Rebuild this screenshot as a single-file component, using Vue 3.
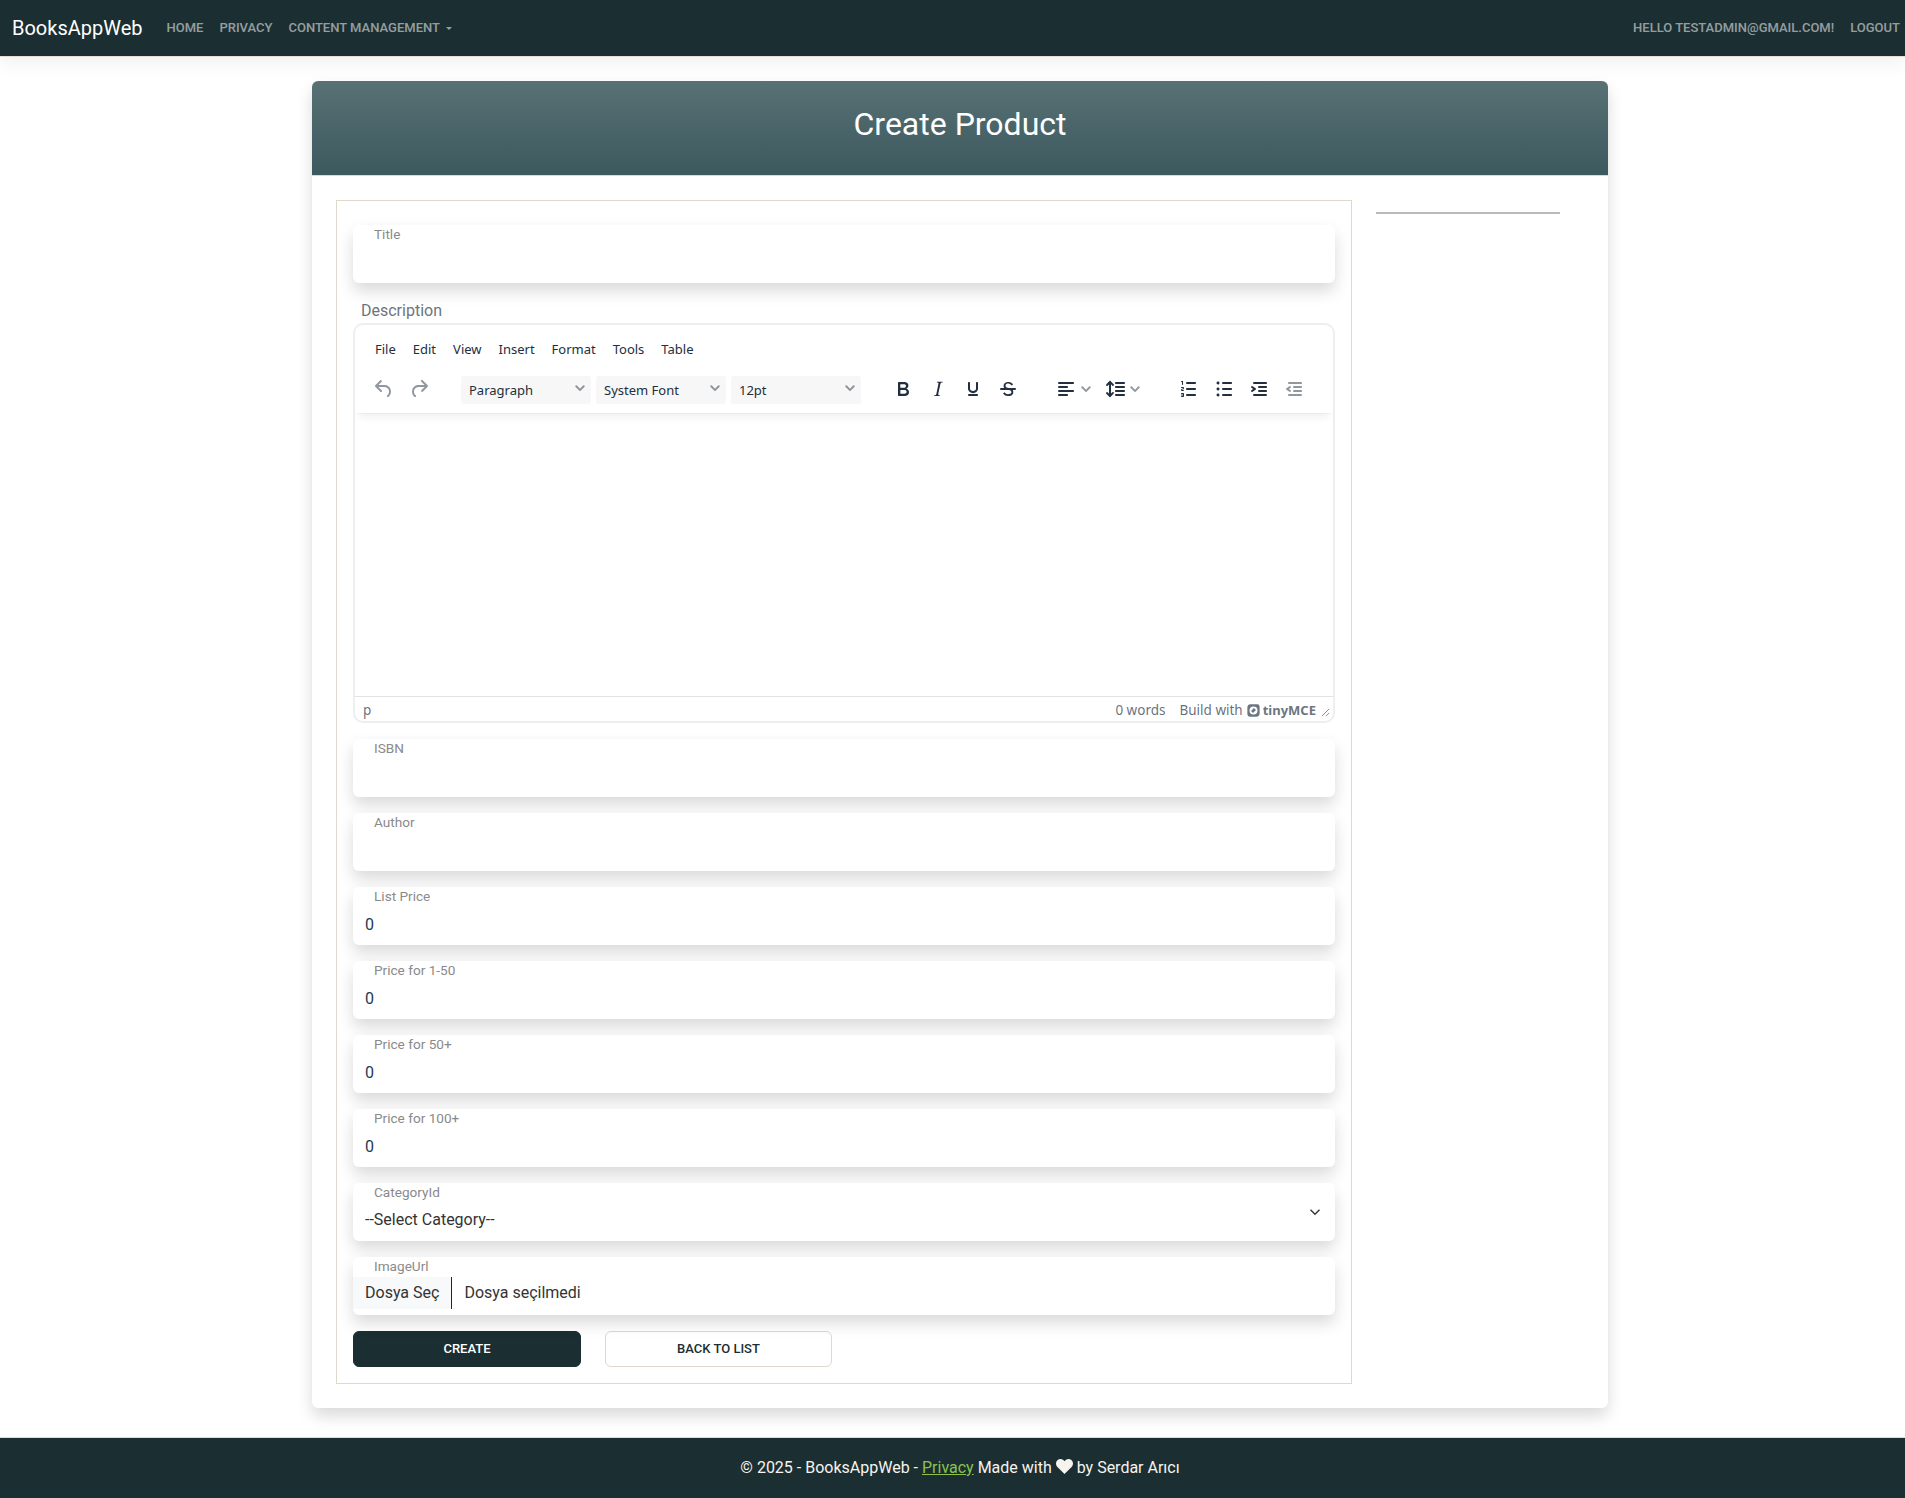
<script setup>
const topFields = [{ label: 'Title', value: '' }]
const fields = [
  { label: 'ISBN', value: '' },
  { label: 'Author', value: '' },
  { label: 'List Price', value: '0' },
  { label: 'Price for 1-50', value: '0' },
  { label: 'Price for 50+', value: '0' },
  { label: 'Price for 100+', value: '0' },
]
const menus = ['File', 'Edit', 'View', 'Insert', 'Format', 'Tools', 'Table']
const selects = ['Paragraph', 'System Font', '12pt']
const chevron = 'M.6.6a.9.9 0 0 1 1.3 0L5 3.7 8.1.6a.9.9 0 0 1 1.3 1.3L5 6.3.6 1.9a.9.9 0 0 1 0-1.3Z'
const icons = {
  undo: 'M6.4 8H12c3.7 0 6.2 2 6.8 5.1.6 2.7-.4 5.6-2.3 6.8a1 1 0 0 1-1-1.8c1.1-.6 1.8-2.7 1.4-4.6-.5-2.1-2.1-3.5-4.9-3.5H6.4l3.3 3.3a1 1 0 1 1-1.4 1.4l-5-5a1 1 0 0 1 0-1.4l5-5a1 1 0 0 1 1.4 1.4L6.4 8Z',
  redo: 'M17.6 10H12c-2.8 0-4.4 1.4-4.9 3.5-.4 2 .3 4 1.4 4.6a1 1 0 1 1-1 1.8c-2-1.2-2.9-4.1-2.3-6.8.6-3 3-5.1 6.8-5.1h5.6l-3.3-3.3a1 1 0 1 1 1.4-1.4l5 5a1 1 0 0 1 0 1.4l-5 5a1 1 0 0 1-1.4-1.4l3.3-3.3Z',
  bold: 'M7.8 19c-.3 0-.5 0-.6-.2l-.2-.5V5.7c0-.2 0-.4.2-.5l.6-.2h5c1.5 0 2.7.3 3.5 1 .7.6 1.1 1.4 1.1 2.5a3 3 0 0 1-.6 1.9c-.4.6-1 1-1.6 1.2.4.1.9.3 1.3.6s.8.7 1 1.2c.4.4.5 1 .5 1.6 0 1.3-.4 2.3-1.3 3-.8.7-2.1 1-3.8 1H7.8Zm5-8.3c.6 0 1.2-.1 1.6-.5.4-.3.6-.7.6-1.3 0-1.1-.8-1.7-2.3-1.7H9.3v3.5h3.4Zm.5 6c.7 0 1.3-.1 1.7-.4.4-.4.6-.9.6-1.5s-.2-1-.7-1.4c-.4-.3-1-.4-2-.4H9.4v3.8h4Z',
  italic: 'M16.7 4.7l-.1.9h-.3c-.6 0-1 0-1.4.3-.3.3-.4.6-.5 1.1l-2.1 9.8v.6c0 .5.4.8 1.4.8h.2l-.2.8H8l.2-.8h.2c1.1 0 1.8-.5 2-1.5l2-9.8.1-.5c0-.6-.4-.8-1.4-.8h-.3l.2-.9h5.8Z',
  underline: 'M16 5c.6 0 1 .4 1 1v5.5a4 4 0 0 1-.4 1.8l-1 1.4a5.3 5.3 0 0 1-5.5 1 5 5 0 0 1-1.6-1c-.5-.4-.8-.9-1.1-1.4a4 4 0 0 1-.4-1.8V6c0-.6.4-1 1-1s1 .4 1 1v5.5c0 .3 0 .6.2 1l.6.7a3.3 3.3 0 0 0 2.2.8 3.4 3.4 0 0 0 2.2-.8c.3-.2.4-.5.6-.8l.2-.9V6c0-.6.4-1 1-1ZM8 17h8c.6 0 1 .4 1 1s-.4 1-1 1H8a1 1 0 0 1 0-2Z',
  strike: 'M15.6 8.5c-.5-.7-1-1.1-1.3-1.3-.6-.4-1.3-.6-2-.6-2.7 0-2.8 1.7-2.8 2.1 0 1.6 1.8 2 3.2 2.3 4.4.9 4.6 2.8 4.6 3.9 0 1.4-.7 4.1-5 4.1A6.2 6.2 0 0 1 7 16.4l1.5-1.1c.4.6 1.6 2 3.7 2 1.6 0 2.5-.4 3-1.2.4-.8.3-2-.8-2.6-.7-.4-1.6-.7-2.9-1-1-.2-3.9-.8-3.9-3.6C7.6 6 10.3 5 12.4 5c2.9 0 4.2 1.6 4.7 2.4l-1.5 1.1ZM5 11h14a1 1 0 0 1 0 2H5a1 1 0 0 1 0-2Z',
  align: 'M5 5h14c.6 0 1 .4 1 1s-.4 1-1 1H5a1 1 0 1 1 0-2Zm0 4h8c.6 0 1 .4 1 1s-.4 1-1 1H5a1 1 0 1 1 0-2Zm0 8h8c.6 0 1 .4 1 1s-.4 1-1 1H5a1 1 0 0 1 0-2Zm0-4h14c.6 0 1 .4 1 1s-.4 1-1 1H5a1 1 0 0 1 0-2Z',
  lineHeight: 'M21 5a1 1 0 0 1 .1 2H13a1 1 0 0 1-.1-2H21zm0 4a1 1 0 0 1 .1 2H13a1 1 0 0 1-.1-2H21zm0 4a1 1 0 0 1 .1 2H13a1 1 0 0 1-.1-2H21zm0 4a1 1 0 0 1 .1 2H13a1 1 0 0 1-.1-2H21zM7 3.6l3.7 3.7a1 1 0 0 1-1.3 1.5h-.1L8 7.3v9.2l1.3-1.3a1 1 0 0 1 1.3 0h.1c.4.4.4 1 0 1.3v.1L7 20.4l-3.7-3.7a1 1 0 0 1 1.3-1.5h.1L6 16.7V7.4L4.7 8.7a1 1 0 0 1-1.3 0h-.1a1 1 0 0 1 0-1.3v-.1L7 3.6z',
  ol: 'M10 17h8c.6 0 1 .4 1 1s-.4 1-1 1h-8a1 1 0 0 1 0-2Zm0-6h8c.6 0 1 .4 1 1s-.4 1-1 1h-8a1 1 0 0 1 0-2Zm0-6h8c.6 0 1 .4 1 1s-.4 1-1 1h-8a1 1 0 1 1 0-2ZM6 4v3.5c0 .3-.2.5-.5.5a.5.5 0 0 1-.5-.5V5h-.5a.5.5 0 0 1 0-1H6Zm-1 8.8l.2.2h1.3c.3 0 .5.2.5.5s-.2.5-.5.5H4.9a1 1 0 0 1-.9-1V13c0-.4.3-.8.6-1l1.2-.4.2-.3a.2.2 0 0 0-.2-.2H4.5a.5.5 0 0 1-.5-.5c0-.3.2-.5.5-.5h1.6c.5 0 .9.4.9 1v.1c0 .4-.3.8-.6 1l-1.2.4-.2.3ZM7 17v2c0 .6-.4 1-1 1H4.5a.5.5 0 0 1 0-1h1.2c.2 0 .3-.1.3-.3 0-.2-.1-.3-.3-.3H4.4a.4.4 0 1 1 0-.8h1.3c.2 0 .3-.1.3-.3 0-.2-.1-.3-.3-.3H4.5a.5.5 0 1 1 0-1H6c.6 0 1 .4 1 1Z',
  ul: 'M11 5h8c.6 0 1 .4 1 1s-.4 1-1 1h-8a1 1 0 0 1 0-2Zm0 6h8c.6 0 1 .4 1 1s-.4 1-1 1h-8a1 1 0 0 1 0-2Zm0 6h8c.6 0 1 .4 1 1s-.4 1-1 1h-8a1 1 0 0 1 0-2ZM4.5 6c0-.4.1-.8.4-1 .3-.4.7-.5 1.1-.5.4 0 .8.1 1 .4.4.3.5.7.5 1.1 0 .4-.1.8-.4 1-.3.4-.7.5-1.1.5-.4 0-.8-.1-1-.4-.4-.3-.5-.7-.5-1.1Zm0 6c0-.4.1-.8.4-1 .3-.4.7-.5 1.1-.5.4 0 .8.1 1 .4.4.3.5.7.5 1.1 0 .4-.1.8-.4 1-.3.4-.7.5-1.1.5-.4 0-.8-.1-1-.4-.4-.3-.5-.7-.5-1.1Zm0 6c0-.4.1-.8.4-1 .3-.4.7-.5 1.1-.5.4 0 .8.1 1 .4.4.3.5.7.5 1.1 0 .4-.1.8-.4 1-.3.4-.7.5-1.1.5-.4 0-.8-.1-1-.4-.4-.3-.5-.7-.5-1.1Z',
  indent: 'M7 5h12c.6 0 1 .4 1 1s-.4 1-1 1H7a1 1 0 1 1 0-2Zm5 4h7c.6 0 1 .4 1 1s-.4 1-1 1h-7a1 1 0 0 1 0-2Zm0 4h7c.6 0 1 .4 1 1s-.4 1-1 1h-7a1 1 0 0 1 0-2Zm-5 4h12a1 1 0 0 1 0 2H7a1 1 0 0 1 0-2Zm-2.6-3.8L6.2 12l-1.8-1.2a1 1 0 0 1 1.2-1.6l3 2a1 1 0 0 1 0 1.6l-3 2a1 1 0 1 1-1.2-1.6Z',
  outdent: 'M7 5h12c.6 0 1 .4 1 1s-.4 1-1 1H7a1 1 0 1 1 0-2Zm5 4h7c.6 0 1 .4 1 1s-.4 1-1 1h-7a1 1 0 0 1 0-2Zm0 4h7c.6 0 1 .4 1 1s-.4 1-1 1h-7a1 1 0 0 1 0-2Zm-5 4h12a1 1 0 0 1 0 2H7a1 1 0 0 1 0-2Zm1.6-3.8a1 1 0 0 1-1.2 1.6l-3-2a1 1 0 0 1 0-1.6l3-2a1 1 0 0 1 1.2 1.6L6.8 12l1.8 1.2Z',
}
</script>

<template>
  <nav class="navbar">
    <a class="brand" href="#">BooksAppWeb</a>
    <ul class="nav-list">
      <li><a href="#">Home</a></li>
      <li><a href="#">Privacy</a></li>
      <li><a href="#" class="dropdown">Content Management</a></li>
    </ul>
    <ul class="nav-list nav-right">
      <li><a href="#">Hello testadmin@gmail.com!</a></li>
      <li><a href="#">Logout</a></li>
    </ul>
  </nav>

  <main class="page">
    <section class="card">
      <div class="card-header">
        <h2>Create Product</h2>
      </div>
      <div class="card-body">
        <form class="form-box" @submit.prevent>
          <div v-for="f in topFields" :key="f.label" class="field">
            <label>{{ f.label }}</label>
            <input type="text" :value="f.value" />
          </div>

          <div class="desc-label">Description</div>
          <div class="editor">
            <div class="editor-header">
              <div class="menubar">
                <span v-for="m in menus" :key="m">{{ m }}</span>
              </div>
              <div class="toolbar">
                <svg class="icon off" viewBox="0 0 24 24"><path :d="icons.undo" /></svg>
                <svg class="icon off gap-icon" viewBox="0 0 24 24"><path :d="icons.redo" /></svg>
                <div class="select-group">
                  <div v-for="s in selects" :key="s" class="tb-select">
                    <span>{{ s }}</span>
                    <svg class="chev" viewBox="0 0 10 10"><path :d="chevron" /></svg>
                  </div>
                </div>
                <div class="icon-group format-group">
                  <svg class="icon" viewBox="0 0 24 24"><path :d="icons.bold" /></svg>
                  <svg class="icon" viewBox="0 0 24 24"><path :d="icons.italic" /></svg>
                  <svg class="icon" viewBox="0 0 24 24"><path :d="icons.underline" /></svg>
                  <svg class="icon" viewBox="0 0 24 24"><path :d="icons.strike" /></svg>
                </div>
                <div class="split-group">
                  <div class="split">
                    <svg class="icon" viewBox="0 0 24 24"><path :d="icons.align" /></svg>
                    <svg class="chev" viewBox="0 0 10 10"><path :d="chevron" /></svg>
                  </div>
                  <div class="split">
                    <svg class="icon" viewBox="0 0 24 24"><path :d="icons.lineHeight" /></svg>
                    <svg class="chev" viewBox="0 0 10 10"><path :d="chevron" /></svg>
                  </div>
                </div>
                <div class="icon-group list-group">
                  <svg class="icon" viewBox="0 0 24 24"><path :d="icons.ol" /></svg>
                  <svg class="icon" viewBox="0 0 24 24"><path :d="icons.ul" /></svg>
                  <svg class="icon" viewBox="0 0 24 24"><path :d="icons.indent" /></svg>
                  <svg class="icon off" viewBox="0 0 24 24"><path :d="icons.outdent" /></svg>
                </div>
              </div>
            </div>
            <div class="editor-content"></div>
            <div class="statusbar">
              <span class="path">p</span>
              <span class="words">0 words</span>
              <span class="build">Build with</span>
              <svg class="tiny-logo" viewBox="0 0 14 14">
                <path d="M4 .4h7a2.600 2.600 0 0 1 2.600 2.600v7a3.600 3.600 0 0 1-3.600 3.600H3A2.600 2.600 0 0 1 .4 11V4A3.600 3.600 0 0 1 4 .4Z" />
                <circle class="cut" cx="7" cy="7" r="4.300" />
                <path d="M7.500 4.400 9.600 6.500 6.500 9.600 4.400 7.500Z" />
              </svg>
              <span class="tiny-name">tinyMCE</span>
              <svg class="resize" viewBox="0 0 10 10">
                <path d="M9 1 1 9M9 5.500 5.500 9" />
              </svg>
            </div>
          </div>

          <div v-for="f in fields" :key="f.label" class="field">
            <label>{{ f.label }}</label>
            <input type="text" :value="f.value" />
          </div>

          <div class="field">
            <label>CategoryId</label>
            <select class="cat-select">
              <option>--Select Category--</option>
            </select>
            <svg class="select-arrow" viewBox="0 0 16 16">
              <path d="m2 5 6 6 6-6" />
            </svg>
          </div>

          <div class="field">
            <label>ImageUrl</label>
            <div class="file-row">
              <span class="file-btn">Dosya Seç</span>
              <span class="file-name">Dosya seçilmedi</span>
            </div>
          </div>

          <div class="actions">
            <button type="submit" class="btn btn-create">Create</button>
            <a href="#" class="btn btn-back">Back to List</a>
          </div>
        </form>
        <aside class="side">
          <hr />
        </aside>
      </div>
    </section>
  </main>

  <footer class="footer">
    © 2025 - BooksAppWeb - <a href="#">Privacy</a> Made with
    <svg class="heart" viewBox="0 0 17 15">
      <path d="M8.500 15 1.400 8C-.5 6-.4 3 1.400 1.300 3.400-.5 6.500-.3 8.500 2.200c2-2.500 5.100-2.700 7.100-.9C17.400 3 17.500 6 15.600 8Z" />
    </svg>
    by Serdar Arıcı
  </footer>
</template>

<style>
html, body {
  margin: 0;
  background: #fff;
}
</style>

<style scoped>
* {
  box-sizing: border-box;
}

.navbar {
  height: 57px;
  display: flex;
  align-items: center;
  padding: 0 5px 0 12px;
  background: #1b2e32;
  border-bottom: 1px solid #e6dfd0;
  box-shadow: 0 8px 16px rgba(0, 0, 0, 0.05);
  font-family: Roboto, sans-serif;
}

.brand {
  color: #fff;
  font-size: 20px;
  text-decoration: none;
  margin-right: 24px;
}

.nav-list {
  display: flex;
  gap: 16px;
  list-style: none;
  margin: 0 0 4px;
  padding: 0;
}

.nav-right {
  margin-left: auto;
}

.nav-list a {
  color: rgba(255, 255, 255, 0.55);
  font-size: 13px;
  font-weight: 500;
  text-transform: uppercase;
  text-decoration: none;
}

.dropdown::after {
  content: "";
  display: inline-block;
  margin-left: 6px;
  vertical-align: 2px;
  border-top: 3px solid;
  border-left: 3px solid transparent;
  border-right: 3px solid transparent;
}

.page {
  width: 1296px;
  margin-left: 312px;
  padding: 24px 0 29px;
  font-family: Roboto, sans-serif;
}

.card {
  background: #fff;
  border-radius: 6px;
  box-shadow: 0 8px 16px rgba(0, 0, 0, 0.15);
}

.card-header {
  height: 95px;
  padding-bottom: 8px;
  display: flex;
  align-items: center;
  justify-content: center;
  background: linear-gradient(180deg, #587175, #3c595d);
  border-bottom: 1px solid #d9d9d9;
  border-radius: 6px 6px 0 0;
}

.card-header h2 {
  margin: 0;
  color: #fff;
  font-size: 32px;
  font-weight: 400;
}

.card-body {
  display: flex;
  gap: 24px;
  padding: 24px;
}

.form-box {
  width: 1016px;
  padding: 24px 16px 16px;
  border: 1px solid #dfd8cc;
}

.side {
  width: 184px;
}

.side hr {
  margin: 12px 0 0;
  border: 0;
  border-top: 2px solid #b9b9b9;
}

.field {
  position: relative;
  height: 58px;
  margin-bottom: 16px;
  background: #fff;
  border-radius: 6px;
  box-shadow: 0 8px 16px rgba(0, 0, 0, 0.15);
}

.field label {
  display: block;
  height: 18px;
  padding-left: 21px;
  color: #8a8a8a;
  font-size: 13.6px;
  line-height: 18px;
}

.field input,
.cat-select {
  display: block;
  width: 100%;
  height: 38px;
  padding: 0 12px;
  border: 0;
  outline: 0;
  background: transparent;
  color: #1f3a52;
  font-family: Roboto, sans-serif;
  font-size: 16px;
}

.cat-select {
  appearance: none;
  height: 37px;
  color: #333;
}

.select-arrow {
  position: absolute;
  right: 14px;
  top: 23px;
  width: 12px;
  height: 12px;
  fill: none;
  stroke: #343a40;
  stroke-width: 2;
}

.file-row {
  display: flex;
  align-items: stretch;
  height: 32px;
  margin-top: 2px;
  color: #333;
  font-size: 16px;
  line-height: 32px;
}

.file-btn {
  padding: 0 12px;
  background: #f8f9fa;
  border-right: 1px solid #212529;
}

.file-name {
  padding-left: 12px;
}

.desc-label {
  height: 24px;
  padding-left: 8px;
  color: #6c757d;
  font-size: 16px;
  line-height: 24px;
}

.editor {
  height: 400px;
  margin-bottom: 16px;
  display: flex;
  flex-direction: column;
  border: 2px solid #eee;
  border-radius: 10px;
  overflow: hidden;
  color: #222f3e;
  font-family: "Noto Sans", sans-serif;
}

.editor-header {
  height: 88px;
  padding: 0 0 0 11px;
  box-shadow: 0 2px 2px -2px rgba(34, 47, 62, 0.1), 0 8px 8px -4px rgba(34, 47, 62, 0.07);
  position: relative;
}

.menubar {
  display: flex;
  gap: 17px;
  height: 47px;
  align-items: center;
  padding: 0 0 0 9px;
  font-size: 13px;
}

.toolbar {
  display: flex;
  align-items: center;
  height: 36px;
}

.icon {
  flex: none;
  width: 24px;
  height: 24px;
  fill: #222f3e;
  margin: 0 5px 2px;
}

.icon.off {
  fill: rgba(34, 47, 62, 0.5);
  margin-left: 6px;
}

.gap-icon {
  margin-right: 0;
}

.select-group {
  display: flex;
  gap: 5px;
  margin-left: 30px;
}

.tb-select {
  width: 130px;
  height: 28px;
  padding: 0 6px 0 8px;
  display: flex;
  align-items: center;
  justify-content: space-between;
  background: #f7f7f7;
  border-radius: 3px;
  font-size: 13px;
}

.chev {
  flex: none;
  width: 10px;
  height: 10px;
  fill: rgba(34, 47, 62, 0.5);
}

.icon-group {
  display: flex;
  gap: 1px;
}

.format-group {
  margin-left: 25px;
}

.split-group {
  display: flex;
  gap: 12px;
  margin-left: 29px;
}

.split {
  display: flex;
  align-items: center;
  gap: 3px;
}

.split .icon {
  margin: 0 0 2px;
}

.split .chev {
  margin-top: 2px;
}

.list-group {
  margin-left: 32px;
}

.icon-group .icon.off {
  margin-left: 5px;
}

.editor-content {
  flex: 1;
}

.statusbar {
  height: 25px;
  display: flex;
  align-items: center;
  padding: 2px 3px 0 8px;
  border-top: 1px solid #e3e3e3;
  color: rgba(34, 47, 62, 0.7);
  font-size: 13.5px;
}

.words {
  margin-left: auto;
}

.build {
  margin-left: 14px;
}

.tiny-logo {
  width: 13px;
  height: 13px;
  margin-left: 4px;
  fill: #6d7680;
}

.tiny-logo .cut {
  fill: #fff;
}

.tiny-name {
  margin-left: 3px;
  font-size: 13px;
  font-weight: 700;
  color: #6d7680;
}

.resize {
  width: 9px;
  height: 9px;
  margin-left: 5px;
  margin-top: 5px;
  fill: none;
  stroke: #7d858e;
  stroke-width: 1;
}

.actions {
  display: flex;
  gap: 24px;
}

.btn {
  display: flex;
  align-items: center;
  justify-content: center;
  width: 228px;
  height: 36px;
  padding-bottom: 2px;
  border: 1px solid #dfd8cc;
  border-radius: 6px;
  font-family: Roboto, sans-serif;
  font-size: 13px;
  font-weight: 500;
  text-transform: uppercase;
  text-decoration: none;
}

.btn-create {
  background: #1b2e32;
  border-color: #1b2e32;
  color: #fff;
}

.btn-back {
  width: 227px;
  background: #fff;
  color: #1b2e32;
}

.footer {
  height: 61px;
  padding: 20px 0 0 15px;
  text-align: center;
  background: #1b2e32;
  border-top: 1px solid #ddd;
  color: #f7f3ee;
  font-family: Roboto, sans-serif;
  font-size: 16px;
  line-height: 19px;
}

.footer a {
  color: #8bc34a;
}

.heart {
  display: inline-block;
  width: 17px;
  height: 15px;
  vertical-align: -1px;
  fill: #f7f3ee;
}
</style>
